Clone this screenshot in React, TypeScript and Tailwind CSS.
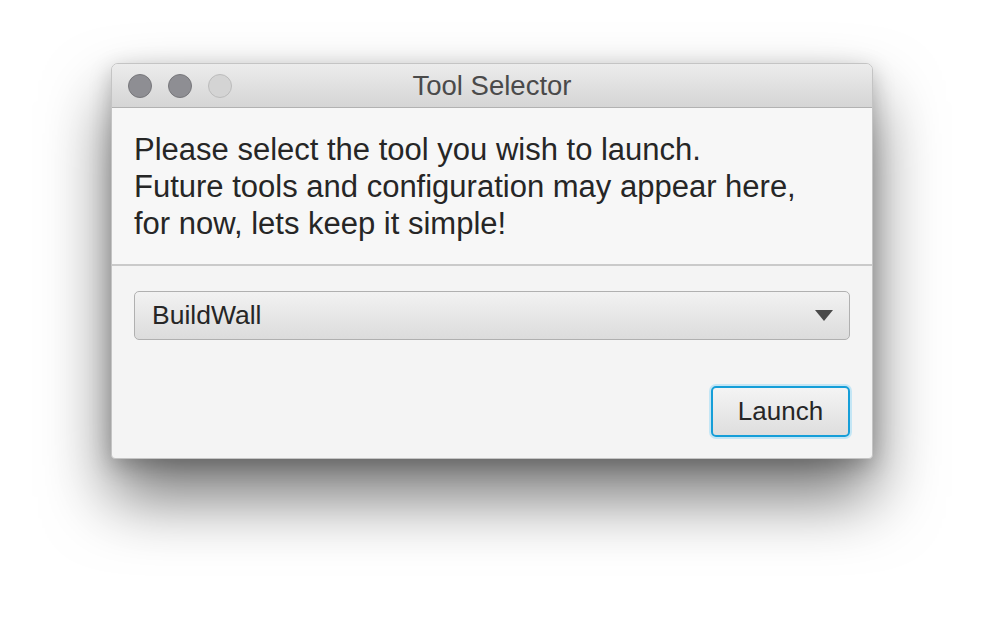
export default function App() {
  return (
    <div className="w-[984px] h-[618px] bg-white pt-[63px] pl-[111px] font-['Liberation_Sans',Arial,sans-serif]">
      <div className="w-[762px] h-[396px] rounded-t-[7px] rounded-b-[4px] border border-[#c4c4c4] bg-[#f4f4f4] overflow-hidden shadow-[0_38px_66px_rgba(0,0,0,0.55),0_6px_22px_rgba(0,0,0,0.22)] flex flex-col">
        {/* Title bar */}
        <div className="relative h-[44px] shrink-0 flex items-center bg-gradient-to-b from-[#ececec] to-[#d5d5d5] border-b border-[#b2b2b2]">
          <div className="flex gap-[16px] pl-[16px]">
            <span className="w-[24px] h-[24px] rounded-full bg-[#8e8e93] border border-[#77777b]" />
            <span className="w-[24px] h-[24px] rounded-full bg-[#8e8e93] border border-[#77777b]" />
            <span className="w-[24px] h-[24px] rounded-full bg-[#d4d4d4] border border-[#bcbcbc]" />
          </div>
          <div className="absolute inset-0 flex items-center justify-center text-[27.5px] text-[#4a4a4a]">
            Tool Selector
          </div>
        </div>

        {/* Message */}
        <div className="px-[22px] pt-[23px] pb-[22px] bg-[#f7f7f7] border-b-2 border-[#cacaca] text-[31px] leading-[37px] text-[#262626]">
          <p>Please select the tool you wish to launch.</p>
          <p>Future tools and configuration may appear here,</p>
          <p>for now, lets keep it simple!</p>
        </div>

        {/* Controls */}
        <div className="flex-1 flex flex-col px-[22px] pt-[25px]">
          <div className="h-[49px] rounded-[5px] border border-[#b0b0b0] bg-gradient-to-b from-[#f2f2f2] to-[#dcdcdc] flex items-center justify-between pl-[17px] pr-[16px] text-[26.5px] text-[#262626]">
            <span>BuildWall</span>
            <svg width="18" height="11" viewBox="0 0 18 11">
              <path d="M0 0 H18 L9 11 Z" fill="#4a4a4a" />
            </svg>
          </div>
          <div className="flex justify-end mt-[46px]">
            <button className="w-[139px] h-[51px] rounded-[5px] border-2 border-[#159ed8] shadow-[0_0_0_2px_#c4e6f5] bg-gradient-to-b from-[#f4f4f4] to-[#dedede] text-[26px] text-[#262626]">
              Launch
            </button>
          </div>
        </div>
      </div>
    </div>
  );
}
